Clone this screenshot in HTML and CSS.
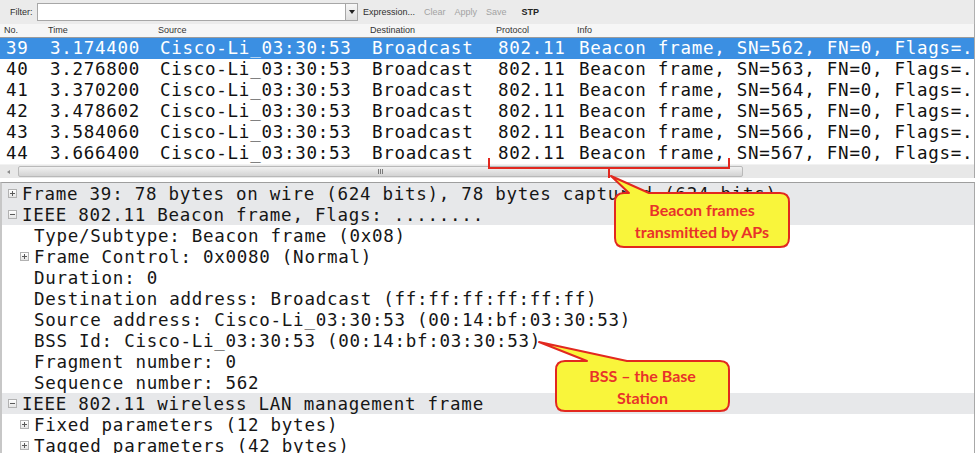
FILE: index.html
```html
<!DOCTYPE html>
<html>
<head>
<meta charset="utf-8">
<link rel="stylesheet" href="styles.css">
</head>
<body>
<div class="app">
  <div class="toolbar">
    <span class="lbl">Filter:</span>
    <div class="combo"><div class="input"></div><div class="drop"><span class="caret"></span></div></div>
    <span class="tb-btn">Expression...</span>
    <span class="tb-btn dis">Clear</span>
    <span class="tb-btn dis">Apply</span>
    <span class="tb-btn dis">Save</span>
    <span class="tb-btn stp">STP</span>
  </div>

  <div class="plist">
    <div class="prow head"><span>No.</span><span>Time</span><span>Source</span><span>Destination</span><span>Protocol</span><span>Info</span></div>
    <div class="prow sel"><span>39</span><span>3.174400</span><span>Cisco-Li_03:30:53</span><span>Broadcast</span><span>802.11</span><span class="info">Beacon frame, SN=562, FN=0, Flags=.</span></div>
    <div class="prow"><span>40</span><span>3.276800</span><span>Cisco-Li_03:30:53</span><span>Broadcast</span><span>802.11</span><span class="info">Beacon frame, SN=563, FN=0, Flags=.</span></div>
    <div class="prow"><span>41</span><span>3.370200</span><span>Cisco-Li_03:30:53</span><span>Broadcast</span><span>802.11</span><span class="info">Beacon frame, SN=564, FN=0, Flags=.</span></div>
    <div class="prow"><span>42</span><span>3.478602</span><span>Cisco-Li_03:30:53</span><span>Broadcast</span><span>802.11</span><span class="info">Beacon frame, SN=565, FN=0, Flags=.</span></div>
    <div class="prow"><span>43</span><span>3.584060</span><span>Cisco-Li_03:30:53</span><span>Broadcast</span><span>802.11</span><span class="info">Beacon frame, SN=566, FN=0, Flags=.</span></div>
    <div class="prow"><span>44</span><span>3.666400</span><span>Cisco-Li_03:30:53</span><span>Broadcast</span><span>802.11</span><span class="info">Beacon frame, SN=567, FN=0, Flags=.</span></div>
    <div class="hscroll">
      <span class="arrow"></span>
      <div class="thumb"><span class="grip"></span></div>
    </div>
  </div>

  <div class="splitter"></div>

  <div class="details">
    <div class="drow hl l1"><span class="exp plus"></span>Frame 39: 78 bytes on wire (624 bits), 78 bytes captured (624 bits)</div>
    <div class="drow hl l1"><span class="exp minus"></span>IEEE 802.11 Beacon frame, Flags: ........</div>
    <div class="drow l2"><span class="exp none"></span>Type/Subtype: Beacon frame (0x08)</div>
    <div class="drow l2"><span class="exp plus"></span>Frame Control: 0x0080 (Normal)</div>
    <div class="drow l2"><span class="exp none"></span>Duration: 0</div>
    <div class="drow l2"><span class="exp none"></span>Destination address: Broadcast (ff:ff:ff:ff:ff:ff)</div>
    <div class="drow l2"><span class="exp none"></span>Source address: Cisco-Li_03:30:53 (00:14:bf:03:30:53)</div>
    <div class="drow l2"><span class="exp none"></span>BSS Id: Cisco-Li_03:30:53 (00:14:bf:03:30:53)</div>
    <div class="drow l2"><span class="exp none"></span>Fragment number: 0</div>
    <div class="drow l2"><span class="exp none"></span>Sequence number: 562</div>
    <div class="drow hl l1"><span class="exp minus"></span>IEEE 802.11 wireless LAN management frame</div>
    <div class="drow l2"><span class="exp plus"></span>Fixed parameters (12 bytes)</div>
    <div class="drow l2"><span class="exp plus"></span>Tagged parameters (42 bytes)</div>
  </div>

  <div class="bracket"></div>
  <div class="tick"></div>

  <div class="callout c1">
    <svg class="shape" width="200" height="85" viewBox="0 0 200 85">
      <path d="M24 23 L29 23 L11 6 L49 23 L180 23 Q189 23 189 32 L189 68 Q189 77 180 77 L24 77 Q15 77 15 68 L15 32 Q15 23 24 23 Z" fill="#f9f53b" stroke="#e2281f" stroke-width="2" stroke-linejoin="round"/>
    </svg>
    <div class="ctext">Beacon frames<br>transmitted by APs</div>
  </div>

  <div class="callout c2">
    <svg class="shape" width="210" height="80" viewBox="0 0 210 80">
      <path d="M35 26 L57 26 L9 7 L97 26 L190 26 Q199 26 199 35 L199 67 Q199 76 190 76 L35 76 Q26 76 26 67 L26 35 Q26 26 35 26 Z" fill="#f9f53b" stroke="#e2281f" stroke-width="2" stroke-linejoin="round"/>
    </svg>
    <div class="ctext">BSS – the Base<br>Station</div>
  </div>
</div>
</body>
</html>
```

FILE: styles.css
```css
* { box-sizing: border-box; }
html, body { margin: 0; padding: 0; background: #ffffff; }
.app {
  position: relative;
  width: 977px;
  height: 453px;
  overflow: hidden;
  background: #ffffff;
  font-family: "Liberation Sans", Arial, sans-serif;
}

/* toolbar */
.toolbar {
  height: 24px;
  width: 975px;
  background: #ebebeb;
  border-right: 1px solid #b0b0b0;
  display: flex;
  align-items: center;
  padding-left: 10px;
  font-size: 9px;
  color: #303030;
}
.lbl { width: 27px; }
.combo { display: flex; height: 18px; width: 321px; }
.combo .input {
  width: 308px;
  height: 18px;
  background: #fff;
  border: 1px solid #a7a7a7;
  border-right: none;
}
.combo .drop {
  width: 13px;
  height: 18px;
  border: 1px solid #a7a7a7;
  background: linear-gradient(#f7f7f7, #dedede);
  display: flex;
  align-items: center;
  justify-content: center;
}
.caret {
  width: 0; height: 0;
  border-left: 3px solid transparent;
  border-right: 3px solid transparent;
  border-top: 4px solid #222;
}
.tb-btn { margin-left: 5px; margin-right: 4px; }
.tb-btn.dis { color: #a3a3a3; }
.tb-btn.stp { margin-left: 11px; font-weight: bold; color: #222; }

/* packet list */
.plist {
  width: 975px;
  border-right: 1px solid #a8a8a8;
}
.prow {
  display: grid;
  grid-template-columns: 46px 110px 212px 126px 81px 1fr;
  height: 21px;
  line-height: 21px;
  font-family: "DejaVu Sans Mono", monospace;
  font-size: 17.5px;
  letter-spacing: 0.73px;
  color: #111;
  white-space: nowrap;
}
.prow span { padding-left: 4px; }
.prow span.info { overflow: hidden; }
.prow span:first-child { padding-left: 6px; }
.prow.sel { background: #3b8fe2; color: #ffffff; }
.prow.head {
  height: 14px;
  line-height: 13px;
  font-family: "Liberation Sans", Arial, sans-serif;
  font-size: 9px;
  letter-spacing: 0;
  color: #333;
  background: #f6f6f6;
  border-bottom: 1px solid #9c9c9c;
}
.prow.head span { padding-left: 2px; }
.prow.head span:first-child { padding-left: 4px; }

.hscroll {
  height: 14px;
  background: #e8e8e8;
  display: flex;
  align-items: center;
  border-top: 1px solid #f2f2f2;
}
.arrow {
  width: 0; height: 0;
  margin-left: 7px;
  margin-right: 8px;
  border-top: 2px solid transparent;
  border-bottom: 2px solid transparent;
  border-right: 3px solid #8a8a8a;
}
.thumb {
  width: 725px;
  height: 11px;
  border: 1px solid #b9b9b9;
  border-radius: 2px;
  background: linear-gradient(#f1f1f1, #d3d3d3);
  display: flex;
  align-items: center;
  justify-content: center;
}
.grip {
  width: 5px;
  height: 5px;
  background: repeating-linear-gradient(90deg, #7a7a7a 0 1px, transparent 1px 2px);
}

.splitter { height: 4px; width: 975px; background: #ffffff; }

/* details */
.details {
  width: 975px;
  border-top: 1px solid #9e9e9e;
  border-left: 2px solid #c7c7c7;
  border-right: 1px solid #a8a8a8;
}
.drow {
  height: 21px;
  display: flex;
  align-items: center;
  font-family: "DejaVu Sans Mono", monospace;
  font-size: 17.5px;
  letter-spacing: 0.73px;
  color: #161616;
  white-space: nowrap;
}
.drow.l1 { padding-left: 6px; }
.drow.l2 { padding-left: 18px; }
.drow.hl { background: #e7e8ea; }
.exp {
  position: relative;
  flex: none;
  width: 9px;
  height: 9px;
  margin-right: 5px;
  border: 1px solid #b2b2b2;
  background: linear-gradient(#ffffff, #e4e4e4);
}
.exp.none { border: none; background: none; }
.exp.plus::before, .exp.minus::before {
  content: "";
  position: absolute;
  left: 1px; top: 3px;
  width: 5px; height: 1px;
  background: #5a5a5a;
}
.exp.plus::after {
  content: "";
  position: absolute;
  left: 3px; top: 1px;
  width: 1px; height: 5px;
  background: #5a5a5a;
}

/* annotations */
.bracket {
  position: absolute;
  left: 488px;
  top: 158px;
  width: 242px;
  height: 11px;
  border: 2px solid #e2281f;
  border-top: none;
}
.tick {
  position: absolute;
  left: 608px;
  top: 167px;
  width: 2px;
  height: 11px;
  background: #e2281f;
}
.callout { position: absolute; }
.callout .shape { position: absolute; left: 0; top: 0; }
.ctext {
  position: absolute;
  font-family: Lato, "Liberation Sans", sans-serif;
  font-weight: bold;
  font-size: 16px;
  line-height: 22px;
  color: #e8322a;
  text-align: center;
}
.c1 { left: 600px; top: 170px; width: 200px; height: 85px; }
.c1 .ctext { left: 15px; top: 29px; width: 174px; }
.c2 { left: 530px; top: 335px; width: 210px; height: 80px; }
.c2 .ctext { left: 26px; top: 30px; width: 173px; }
```
